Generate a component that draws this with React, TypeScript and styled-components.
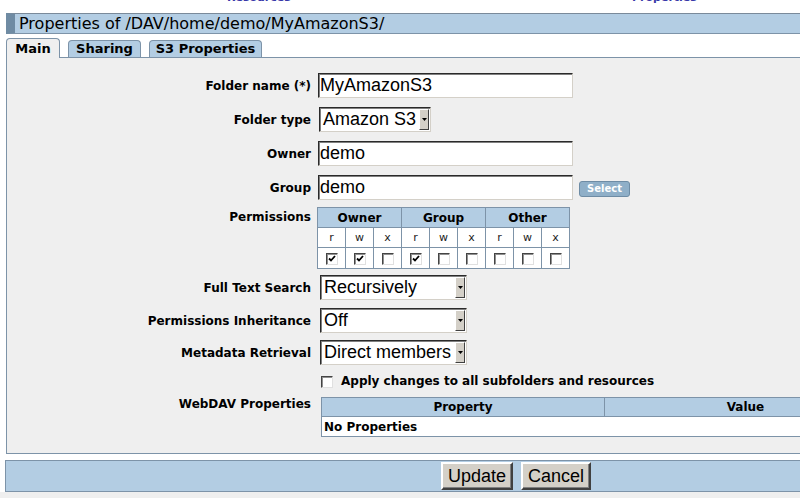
import styled, { createGlobalStyle } from "styled-components";

const GlobalStyle = createGlobalStyle`
	html, body {
		margin: 0;
		padding: 0;
		background: #ffffff;
		overflow: hidden;
	}
	body {
		font-family: "DejaVu Sans", Verdana, sans-serif;
		color: #000;
	}
`;

const BLUE = "#b3cde3";
const LINE = "#7d93a8";
const PANEL = "#efefef";

const Page = styled.div`
	width: 1026px;
`;

const TopNav = styled.div`
	height: 4px;
	overflow: hidden;
	display: flex;
	align-items: flex-end;
	padding-left: 227px;
`;

const NavLink = styled.a<{ $w: number }>`
	flex: 0 0 ${(p) => p.$w}px;
	font: bold 11px/13px "DejaVu Sans", Verdana, sans-serif;
	color: #3838a8;
	text-decoration: none;
`;

const TitleBar = styled.div`
	margin: 9px 0 0 6px;
	height: 19px;
	background: ${BLUE};
	border-top: 1px solid #7a8a9a;
	border-bottom: 1px solid ${LINE};
	border-left: 9px solid #6f8ba3;
	padding-left: 4px;
	font-size: 16px;
	line-height: 19px;
	white-space: nowrap;
`;

const TabBar = styled.div`
	margin: 4px 0 0 6px;
	height: 19px;
	display: flex;
	align-items: flex-end;
	gap: 8px;
	border-bottom: 1px solid ${LINE};
`;

const Tab = styled.div<{ $active?: boolean; $w: number }>`
	box-sizing: border-box;
	width: ${(p) => p.$w}px;
	height: ${(p) => (p.$active ? 20 : 17)}px;
	margin-bottom: ${(p) => (p.$active ? -1 : 0)}px;
	background: ${(p) => (p.$active ? PANEL : BLUE)};
	border: 1px solid ${LINE};
	border-bottom: none;
	border-radius: 4px 4px 0 0;
	font-size: 13px;
	font-weight: bold;
	line-height: ${(p) => (p.$active ? 19 : 15)}px;
	text-align: center;
	white-space: nowrap;
`;

const Panel = styled.div`
	margin-left: 6px;
	height: 380px;
	background: ${PANEL};
	border-left: 1px solid ${LINE};
	border-bottom: 1px solid ${LINE};
	padding-top: 15px;
	overflow: hidden;
`;

const Row = styled.div<{ $mt: number; $top?: boolean }>`
	display: grid;
	grid-template-columns: 304px auto;
	column-gap: 7px;
	align-items: ${(p) => (p.$top ? "start" : "center")};
	margin-top: ${(p) => p.$mt}px;
	&:first-child {
		margin-top: 0;
	}
`;

const Label = styled.div<{ $pt?: number }>`
	text-align: right;
	font-size: 12px;
	font-weight: bold;
	line-height: 14px;
	padding-top: ${(p) => p.$pt || 0}px;
	white-space: nowrap;
`;

const Field = styled.div<{ $indent?: number }>`
	display: flex;
	align-items: center;
	gap: 6px;
	margin-left: ${(p) => p.$indent || 0}px;
`;

const TextInput = styled.div`
	box-sizing: border-box;
	width: 255px;
	height: 25px;
	background: #fff;
	border: 1px solid;
	border-color: #2a2a2a #d4d0c8 #d4d0c8 #2a2a2a;
	box-shadow: inset 1px 1px 0 #808080;
	padding-left: 1px;
	font: 18px/23px "Liberation Sans", Arial, sans-serif;
`;

const SelectBox = styled.div<{ $w: number }>`
	box-sizing: border-box;
	width: ${(p) => p.$w}px;
	height: 25px;
	display: flex;
	background: #fff;
	border: 1px solid;
	border-color: #2a2a2a #d4d0c8 #d4d0c8 #2a2a2a;
	box-shadow: inset 1px 1px 0 #808080;
	padding: 1px;
`;

const SelectText = styled.div`
	flex: 1;
	padding-left: 2px;
	font: 18px/21px "Liberation Sans", Arial, sans-serif;
	white-space: nowrap;
	overflow: hidden;
`;

const ArrowButton = styled.div`
	box-sizing: border-box;
	width: 10px;
	background: #d4d0c8;
	border: 1px solid;
	border-color: #ffffff #404040 #404040 #ffffff;
	display: flex;
	align-items: center;
	justify-content: center;
`;

const SmallButton = styled.div`
	box-sizing: border-box;
	width: 51px;
	height: 16px;
	margin-top: 3px;
	background: #8fafc8;
	border: 1px solid #6e8ca5;
	border-radius: 3px;
	color: #fff;
	font-size: 10px;
	font-weight: bold;
	line-height: 14px;
	text-align: center;
`;

const PermTable = styled.table`
	border-collapse: collapse;
	border: 1px solid ${LINE};
	background: #fff;
`;

const PermHead = styled.th`
	background: ${BLUE};
	border: 1px solid ${LINE};
	height: 19px;
	padding: 0;
	font-size: 12px;
	font-weight: bold;
	text-align: center;
`;

const PermCell = styled.td<{ $h: number }>`
	border: 1px solid ${LINE};
	width: 27px;
	height: ${(p) => p.$h}px;
	padding: 0;
	font-size: 11px;
	color: #222;
	text-align: center;
	vertical-align: middle;
`;

const CheckSquare = styled.span`
	box-sizing: border-box;
	display: inline-flex;
	align-items: center;
	justify-content: center;
	width: 12px;
	height: 12px;
	background: #fff;
	border: 1px solid;
	border-color: #444 #e0e0e0 #e0e0e0 #444;
	box-shadow: inset 1px 1px 0 #909090;
	vertical-align: middle;
`;

const CheckLine = styled.label`
	display: flex;
	align-items: center;
	gap: 8px;
	font-size: 12px;
	font-weight: bold;
	line-height: 15px;
	white-space: nowrap;
`;

const PropTable = styled.table`
	border-collapse: collapse;
	border: 1px solid ${LINE};
	width: 566px;
	background: #fff;
`;

const PropHead = styled.th<{ $w?: number }>`
	background: ${BLUE};
	border: 1px solid ${LINE};
	height: 18px;
	padding: 0;
	width: ${(p) => (p.$w ? `${p.$w}px` : "auto")};
	font-size: 12px;
	font-weight: bold;
	text-align: center;
`;

const PropCell = styled.td`
	height: 19px;
	padding: 0 0 0 2px;
	font-size: 12px;
	font-weight: bold;
	text-align: left;
`;

const ButtonBar = styled.div`
	margin: 6px 0 0 5px;
	height: 30px;
	background: ${BLUE};
	border-top: 1px solid ${LINE};
	border-bottom: 1px solid ${LINE};
	border-left: 1px solid ${LINE};
	display: flex;
	align-items: center;
	justify-content: center;
	gap: 8px;
`;

const PushButton = styled.button`
	box-sizing: border-box;
	height: 28px;
	padding: 0 5px;
	background: #d4d0c8;
	border: 2px solid;
	border-color: #ffffff #404040 #404040 #ffffff;
	box-shadow: inset -1px -1px 0 #808080;
	font: 18px/22px "Liberation Sans", Arial, sans-serif;
	color: #000;
`;

const FooterFill = styled.div`
	height: 40px;
	background: ${PANEL};
`;

function Arrow() {
	return (
		<svg width="5" height="3" viewBox="0 0 5 3">
			<path d="M0 0h5L2.5 3z" fill="#000" />
		</svg>
	);
}

function Select({ width, value }: { width: number; value: string }) {
	return (
		<SelectBox $w={width}>
			<SelectText>{value}</SelectText>
			<ArrowButton>
				<Arrow />
			</ArrowButton>
		</SelectBox>
	);
}

function Checkbox({ checked }: { checked?: boolean }) {
	return (
		<CheckSquare>
			{checked ? (
				<svg width="8" height="8" viewBox="0 0 8 8">
					<path d="M1 3.5l2 2 4-4.5" stroke="#000" strokeWidth="1.8" fill="none" />
				</svg>
			) : null}
		</CheckSquare>
	);
}

const groups = ["Owner", "Group", "Other"];
const modes = ["r", "w", "x"];
const granted = [true, true, false, true, false, false, false, false, false];

export default function App() {
	return (
		<Page>
			<GlobalStyle />
			<TopNav>
				<NavLink $w={405}>Resources</NavLink>
				<NavLink $w={100}>Properties</NavLink>
			</TopNav>
			<TitleBar>Properties of /DAV/home/demo/MyAmazonS3/</TitleBar>
			<TabBar>
				<Tab $active $w={54}>Main</Tab>
				<Tab $w={73}>Sharing</Tab>
				<Tab $w={113}>S3 Properties</Tab>
			</TabBar>
			<Panel>
				<Row $mt={0}>
					<Label>Folder name (*)</Label>
					<Field>
						<TextInput>MyAmazonS3</TextInput>
					</Field>
				</Row>
				<Row $mt={9}>
					<Label>Folder type</Label>
					<Field $indent={1}>
						<Select width={112} value="Amazon S3" />
					</Field>
				</Row>
				<Row $mt={9}>
					<Label>Owner</Label>
					<Field>
						<TextInput>demo</TextInput>
					</Field>
				</Row>
				<Row $mt={9}>
					<Label>Group</Label>
					<Field>
						<TextInput>demo</TextInput>
						<SmallButton>Select</SmallButton>
					</Field>
				</Row>
				<Row $mt={7} $top>
					<Label $pt={3}>Permissions</Label>
					<Field $indent={-1}>
						<PermTable>
							<thead>
								<tr>
									{groups.map((g) => (
										<PermHead key={g} colSpan={3}>
											{g}
										</PermHead>
									))}
								</tr>
							</thead>
							<tbody>
								<tr>
									{groups.map((g) =>
										modes.map((m) => (
											<PermCell key={g + m} $h={19}>
												{m}
											</PermCell>
										))
									)}
								</tr>
								<tr>
									{granted.map((on, i) => (
										<PermCell key={i} $h={20}>
											<Checkbox checked={on} />
										</PermCell>
									))}
								</tr>
							</tbody>
						</PermTable>
					</Field>
				</Row>
				<Row $mt={6}>
					<Label>Full Text Search</Label>
					<Field $indent={2}>
						<Select width={147} value="Recursively" />
					</Field>
				</Row>
				<Row $mt={8}>
					<Label>Permissions Inheritance</Label>
					<Field $indent={2}>
						<Select width={147} value="Off" />
					</Field>
				</Row>
				<Row $mt={7}>
					<Label>Metadata Retrieval</Label>
					<Field $indent={2}>
						<Select width={147} value="Direct members" />
					</Field>
				</Row>
				<Row $mt={9}>
					<span />
					<Field $indent={3}>
						<CheckLine>
							<Checkbox />
							Apply changes to all subfolders and resources
						</CheckLine>
					</Field>
				</Row>
				<Row $mt={8} $top>
					<Label>WebDAV Properties</Label>
					<Field $indent={3}>
						<PropTable>
							<thead>
								<tr>
									<PropHead $w={282}>Property</PropHead>
									<PropHead>Value</PropHead>
								</tr>
							</thead>
							<tbody>
								<tr>
									<PropCell colSpan={2}>No Properties</PropCell>
								</tr>
							</tbody>
						</PropTable>
					</Field>
				</Row>
			</Panel>
			<ButtonBar>
				<PushButton>Update</PushButton>
				<PushButton>Cancel</PushButton>
			</ButtonBar>
			<FooterFill />
		</Page>
	);
}
